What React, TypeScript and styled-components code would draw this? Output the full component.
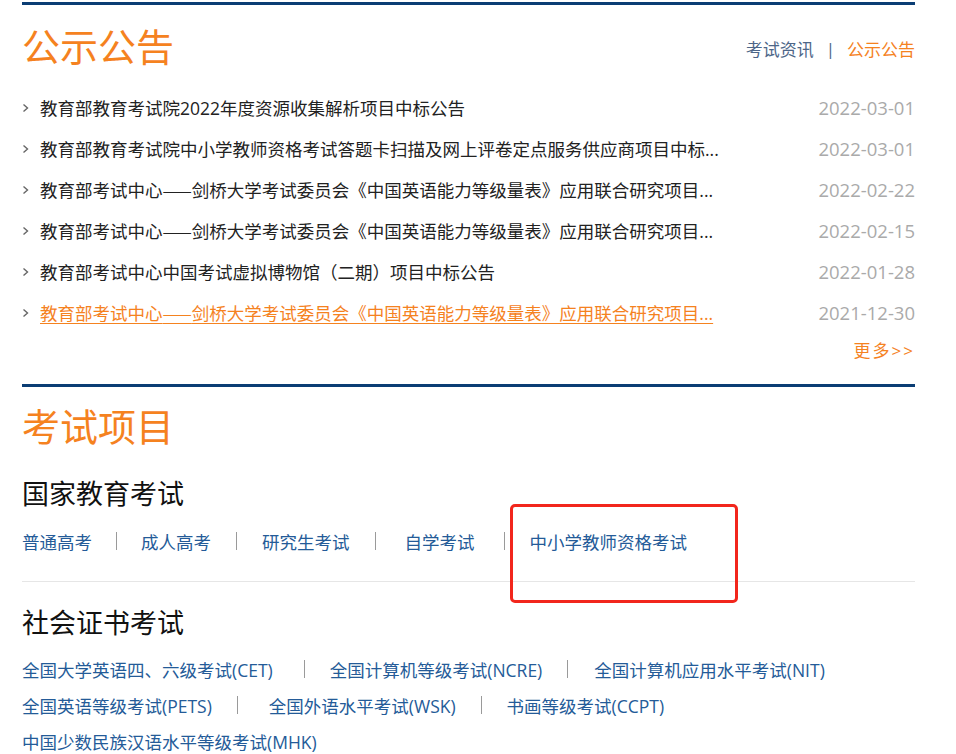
import React from "react";
import styled, { createGlobalStyle } from "styled-components";

const Global = createGlobalStyle`
  html, body { margin: 0; padding: 0; background: #fff; }
  body { font-family: "Open Sans", "Noto Sans CJK SC", sans-serif; color: #222; }
  * { box-sizing: border-box; }
`;

const Page = styled.div`
  width: 893px;
  margin-left: 22px;
  padding-top: 2px;
`;

const Bar = styled.div`
  height: 3px;
  background: #0b3d74;
`;

const Head = styled.div`
  height: 82px;
  display: flex;
  align-items: center;
  justify-content: space-between;
`;

const BigTitle = styled.h2`
  margin: 0;
  font-weight: 400;
  font-size: 38px;
  line-height: 1;
  color: #f5821f;
`;

const Tabs = styled.div`
  display: flex;
  align-items: center;
  font-size: 17px;
  gap: 12px;
  margin-top: 4px;
`;

const Tab = styled.a<{ $active?: boolean }>`
  color: ${(p) => (p.$active ? "#f5821f" : "#4d6688")};
  text-decoration: none;
`;

const TabSep = styled.span`
  color: #4d6688;
`;

const List = styled.ul`
  list-style: none;
  margin: 0;
  padding: 0;
`;

const Row = styled.li`
  height: 41px;
  display: flex;
  align-items: center;
`;

const Chevron = styled.svg`
  width: 7px;
  height: 10px;
  flex: none;
  margin-right: 11px;
`;

const ItemTitle = styled.a<{ $hot?: boolean }>`
  flex: 1;
  font-size: 17.5px;
  color: ${(p) => (p.$hot ? "#f5821f" : "#222")};
  text-decoration: ${(p) => (p.$hot ? "underline" : "none")};
  text-underline-offset: 3px;
  white-space: nowrap;
  overflow: hidden;
`;

const Dash = styled.span`
  font-family: "Noto Sans CJK SC", sans-serif;
`;

const ItemDate = styled.span`
  font-size: 18.5px;
  color: #aaa;
  flex: none;
`;

const More = styled.div`
  height: 32px;
  display: flex;
  align-items: center;
  justify-content: flex-end;
  font-size: 17px;
  color: #f5821f;
  letter-spacing: 2px;
  margin-bottom: 19px;
`;

const SectionHead = styled.div`
  height: 77px;
  display: flex;
  align-items: center;
`;

const SubTitle = styled.h3<{ $top: number }>`
  margin: ${(p) => p.$top}px 0 0;
  font-weight: 400;
  font-size: 27px;
  line-height: 40px;
  color: #111;
`;

const LinkRow = styled.div<{ $h: number; $top?: number }>`
  position: relative;
  display: flex;
  align-items: center;
  height: ${(p) => p.$h}px;
  margin-top: ${(p) => p.$top ?? 0}px;
`;

const ExamLink = styled.a`
  font-size: 17.5px;
  color: #245b98;
  text-decoration: none;
  white-space: nowrap;
`;

const Sep = styled.span<{ $l: number; $r: number }>`
  width: 1px;
  height: 18px;
  background: #9a9a9a;
  margin: 0 ${(p) => p.$r}px 0 ${(p) => p.$l}px;
`;

const Divider = styled.div`
  height: 1px;
  background: #e6e6e6;
  margin-top: 23px;
`;

const Highlight = styled.div`
  position: absolute;
  left: 488px;
  top: -20px;
  width: 228px;
  height: 99px;
  border: 3px solid #f2261c;
  border-radius: 5px;
  pointer-events: none;
`;

const news: { t: string; d: string; hot?: boolean }[] = [
  { t: "教育部教育考试院2022年度资源收集解析项目中标公告", d: "2022-03-01" },
  { t: "教育部教育考试院中小学教师资格考试答题卡扫描及网上评卷定点服务供应商项目中标...", d: "2022-03-01" },
  { t: "教育部考试中心——剑桥大学考试委员会《中国英语能力等级量表》应用联合研究项目...", d: "2022-02-22" },
  { t: "教育部考试中心——剑桥大学考试委员会《中国英语能力等级量表》应用联合研究项目...", d: "2022-02-15" },
  { t: "教育部考试中心中国考试虚拟博物馆（二期）项目中标公告", d: "2022-01-28" },
  { t: "教育部考试中心——剑桥大学考试委员会《中国英语能力等级量表》应用联合研究项目...", d: "2021-12-30", hot: true },
];

type LinkLine = { items: string[]; gaps: [number, number][] };

const national: LinkLine = {
  items: ["普通高考", "成人高考", "研究生考试", "自学考试", "中小学教师资格考试"],
  gaps: [
    [24, 24],
    [25, 25],
    [25, 29],
    [29, 25],
  ],
};

const certRows: LinkLine[] = [
  {
    items: ["全国大学英语四、六级考试(CET)", "全国计算机等级考试(NCRE)", "全国计算机应用水平考试(NIT)"],
    gaps: [
      [31, 25],
      [25, 26],
    ],
  },
  {
    items: ["全国英语等级考试(PETS)", "全国外语水平考试(WSK)", "书画等级考试(CCPT)"],
    gaps: [
      [25, 31],
      [25, 25],
    ],
  },
  { items: ["中国少数民族汉语水平等级考试(MHK)"], gaps: [] },
];

function TitleText({ text }: { text: string }) {
  const parts = text.split("——");
  return (
    <>
      {parts.map((p, i) => (
        <React.Fragment key={i}>
          {i > 0 && <Dash>——</Dash>}
          {p}
        </React.Fragment>
      ))}
    </>
  );
}

function Links({ line }: { line: LinkLine }) {
  return (
    <>
      {line.items.map((n, i) => (
        <React.Fragment key={n}>
          {i > 0 && <Sep $l={line.gaps[i - 1][0]} $r={line.gaps[i - 1][1]} />}
          <ExamLink>{n}</ExamLink>
        </React.Fragment>
      ))}
    </>
  );
}

export default function App() {
  return (
    <>
      <Global />
      <Page>
        <Bar />
        <Head>
          <BigTitle>公示公告</BigTitle>
          <Tabs>
            <Tab>考试资讯</Tab>
            <TabSep>|</TabSep>
            <Tab $active>公示公告</Tab>
          </Tabs>
        </Head>
        <List>
          {news.map((n, i) => (
            <Row key={i}>
              <Chevron viewBox="0 0 7 10">
                <polyline points="1.5,1.5 5.5,5 1.5,8.5" fill="none" stroke="#666" strokeWidth="1.4" />
              </Chevron>
              <ItemTitle $hot={n.hot}>
                <TitleText text={n.t} />
              </ItemTitle>
              <ItemDate>{n.d}</ItemDate>
            </Row>
          ))}
        </List>
        <More>更多&gt;&gt;</More>
        <Bar />
        <SectionHead>
          <BigTitle>考试项目</BigTitle>
        </SectionHead>
        <SubTitle $top={10}>国家教育考试</SubTitle>
        <LinkRow $h={34} $top={10}>
          <Links line={national} />
          <Highlight />
        </LinkRow>
        <Divider />
        <SubTitle $top={21}>社会证书考试</SubTitle>
        {certRows.map((r, ri) => (
          <LinkRow key={ri} $h={36} $top={ri === 0 ? 8 : 0}>
            <Links line={r} />
          </LinkRow>
        ))}
      </Page>
    </>
  );
}
